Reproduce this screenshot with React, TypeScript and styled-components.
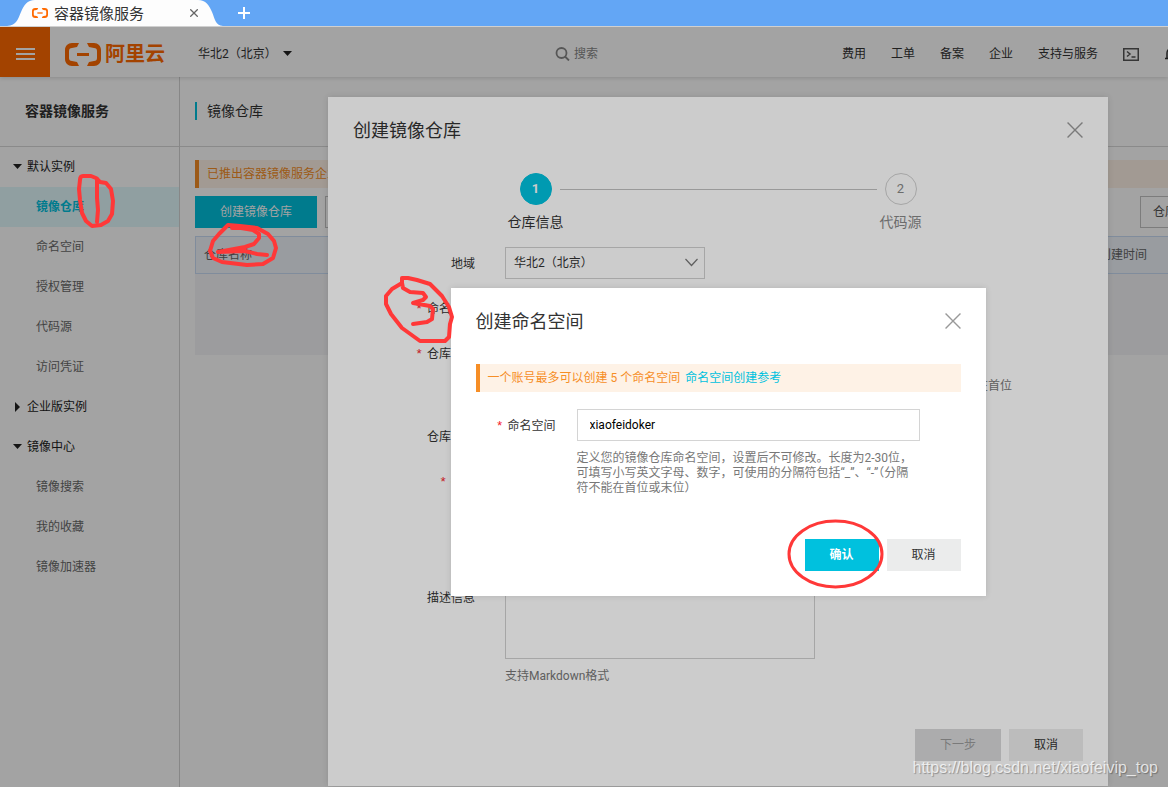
import React from 'react';
import styled, { createGlobalStyle } from 'styled-components';

const GlobalStyle = createGlobalStyle`
  * { box-sizing: border-box; }
  body {
    margin: 0;
    font-family: Roboto, "Noto Sans CJK SC", sans-serif;
    font-size: 12px;
    line-height: 16px;
    color: #333;
    background: #fff;
  }
  button, input, select, textarea { font: inherit; color: inherit; margin: 0; }
  button { cursor: pointer; }
  h1, h2, h3, p, ul { margin: 0; padding: 0; font-weight: 400; }
  ul { list-style: none; }
  a { color: inherit; text-decoration: none; }
`;

const accent = '#00c1de';
const brand = '#ff6a00';

const Page = styled.div`
  position: relative;
  display: flex;
  flex-direction: column;
  min-height: 100vh;
  overflow: hidden;
`;

/* browser tab strip */

const TabStrip = styled.div`
  display: flex;
  align-items: center;
  gap: 14px;
  height: 27px;
  padding-left: 7px;
  background: #63a6f5;
  border-bottom: 1px solid #d0d0d0;
`;

const Tab = styled.div`
  position: relative;
  display: flex;
  align-items: center;
  width: 216px;
  height: 26px;
  padding: 0 25px;
  gap: 6px;
  font-size: 15px;
`;

const TabShape = styled.svg`
  position: absolute;
  inset: 0;
`;

const TabLogo = styled.span`
  position: relative;
  display: flex;
`;

const TabTitle = styled.span`
  position: relative;
  flex: 1;
  height: 24px;
  line-height: 26px;
  white-space: nowrap;
`;

const IconButton = styled.button`
  position: relative;
  display: flex;
  align-items: center;
  justify-content: center;
  padding: 0;
  border: 0;
  background: none;
`;

/* console header */

const Console = styled.div`
  position: relative;
  flex: 1;
  display: flex;
  flex-direction: column;
  overflow: hidden;
`;

const Header = styled.header`
  position: relative;
  display: flex;
  align-items: center;
  height: 50px;
  padding-top: 4px;
  background: #fff;
  box-shadow: 0 1px 4px rgba(0, 0, 0, 0.15);
`;

const MenuButton = styled(IconButton)`
  align-self: stretch;
  width: 50px;
  margin-top: -4px;
  padding-top: 4px;
  background: ${brand};
`;

const Logo = styled.a`
  display: flex;
  align-items: center;
  gap: 4px;
  margin-left: 15px;
  color: ${brand};
  font-size: 20px;
  font-weight: 700;
  line-height: 28px;
  white-space: nowrap;
`;

const RegionButton = styled.button`
  display: flex;
  align-items: center;
  gap: 5px;
  width: 95px;
  margin-left: 33px;
  padding: 0;
  border: 0;
  background: none;
  white-space: nowrap;
`;

const SearchArea = styled.div`
  flex: 1;
  padding-left: 262px;
`;

const SearchButton = styled.button`
  display: flex;
  align-items: center;
  gap: 4px;
  padding: 0;
  border: 0;
  background: none;
  color: #888;
  white-space: nowrap;
`;

const TopNav = styled.nav`
  display: flex;
  align-items: center;
  gap: 25px;
  width: 326px;
  overflow: hidden;
  white-space: nowrap;

  & > * { flex: none; }
`;

/* sidebar */

const Body = styled.div`
  flex: 1;
  display: flex;
`;

const Sidebar = styled.aside`
  flex: 0 0 180px;
  border-right: 1px solid #d4d4d4;
`;

const SidebarTitle = styled.h2`
  height: 70px;
  padding-left: 25px;
  border-bottom: 1px solid #d9d9d9;
  font-size: 14px;
  font-weight: 700;
  line-height: 68px;
`;

const NavGroup = styled.button`
  display: flex;
  align-items: center;
  gap: 4px;
  width: 100%;
  height: 40px;
  padding: 0 0 0 12px;
  border: 0;
  background: none;
  color: #222;
`;

const NavItem = styled.a<{ $active?: boolean }>`
  display: block;
  height: 40px;
  padding-left: 36px;
  line-height: 41px;
  color: ${(p) => (p.$active ? accent : '#6a6a6a')};
  background: ${(p) => (p.$active ? '#e1f9fd' : 'transparent')};
  font-weight: ${(p) => (p.$active ? 700 : 400)};
`;

/* repository list behind the dialogs */

const Main = styled.main`
  flex: 1;
  min-width: 0;
`;

const PageTitle = styled.div`
  display: flex;
  align-items: center;
  height: 70px;
  padding: 0 0 2px 15px;
  border-bottom: 1px solid #d9d9d9;
`;

const PageHeading = styled.h1`
  padding-left: 10px;
  border-left: 2px solid ${accent};
  font-size: 14px;
  line-height: 18px;
`;

const Content = styled.div`
  display: flex;
  flex-direction: column;
  gap: 8px;
  padding: 13px 0 0 15px;
`;

const Alert = styled.div`
  height: 28px;
  padding-left: 8px;
  border-left: 4px solid #f68e26;
  background: #fef2e6;
  color: #f68e26;
  line-height: 29px;
  white-space: nowrap;
`;

const AlertLink = styled.a`
  margin-left: 2px;
  color: ${accent};
`;

const Toolbar = styled.div`
  display: flex;
  gap: 8px;
  height: 32px;
`;

const CreateButton = styled.button`
  width: 122px;
  padding: 0;
  border: 0;
  background: ${accent};
  color: #fff;
`;

const ToolbarSelect = styled.select`
  appearance: none;
  width: 120px;
  padding: 0 12px;
  border: 1px solid #c4c4c4;
  border-radius: 0;
  background: #fff;
  color: #555;
`;

const ToolbarEnd = styled.div`
  display: flex;
  width: 28px;
  margin-left: auto;
  overflow: hidden;

  & > * { flex: none; }
`;

const RepoTable = styled.table`
  width: 100%;
  border-collapse: collapse;
  background: #f5f6f8;

  th {
    height: 37px;
    padding: 0 8px;
    border: solid #c9dcf5;
    border-width: 1px 0;
    background: #f0f5fc;
    color: #666;
    font-weight: 400;
    text-align: left;
    white-space: nowrap;
  }
  th:first-child { border-left-width: 1px; }
  th:last-child { width: 77px; }
  td { height: 81px; padding: 0; }
`;

/* dialogs */

const Overlay = styled.div`
  position: absolute;
  inset: 0;
  display: flex;
  justify-content: center;
  align-items: flex-start;
  padding-left: 268px;
  background: rgba(0, 0, 0, 0.2);
`;

const Dialog = styled.section<{ $width: number; $top: number }>`
  flex: none;
  width: ${(p) => p.$width}px;
  margin-top: ${(p) => p.$top}px;
  padding: 21px 25px 25px;
  background: #fff;
  box-shadow: 0 0 6px rgba(0, 0, 0, 0.12);
`;

const DialogHead = styled.div`
  display: flex;
  align-items: center;
  justify-content: space-between;
  margin-bottom: 31px;
`;

const DialogTitle = styled.h2`
  height: 24px;
  font-size: 18px;
  line-height: 26px;
`;

const Steps = styled.div`
  display: grid;
  grid-template-columns: 32px 1fr 32px;
  gap: 7px 8px;
  align-items: center;
  justify-items: center;
  width: 397px;
  margin: 0 auto 15px;
`;

const StepDot = styled.span<{ $active?: boolean }>`
  width: 32px;
  height: 32px;
  border: 1px solid ${(p) => (p.$active ? accent : '#d0d0d0')};
  border-radius: 50%;
  background: ${(p) => (p.$active ? accent : 'transparent')};
  color: ${(p) => (p.$active ? '#fff' : '#888')};
  font-size: 13px;
  font-weight: ${(p) => (p.$active ? 700 : 400)};
  line-height: 30px;
  text-align: center;
`;

const StepLine = styled.span`
  width: 100%;
  height: 1px;
  background: #c0c0c0;
`;

const StepLabel = styled.span<{ $active?: boolean }>`
  color: ${(p) => (p.$active ? '#333' : '#888')};
  font-size: 14px;
  line-height: 20px;
  white-space: nowrap;
`;

const Form = styled.div<{ $gap: number }>`
  display: flex;
  flex-direction: column;
  gap: ${(p) => p.$gap}px;
`;

const Row = styled.div<{ $label: number; $gap: number }>`
  display: grid;
  grid-template-columns: ${(p) => p.$label}px minmax(0, 1fr);
  column-gap: ${(p) => p.$gap}px;
`;

const Label = styled.label<{ $required?: boolean }>`
  height: 32px;
  line-height: 34px;
  text-align: right;
  white-space: nowrap;

  &::before {
    content: ${(p) => (p.$required ? '"*"' : 'none')};
    margin-right: 4px;
    color: #f5222d;
    font-family: "Liberation Mono", monospace;
    font-size: 13px;
    line-height: 16px;
    vertical-align: middle;
  }
`;

const Control = styled.div<{ $width: number }>`
  position: relative;
  display: flex;
  flex-direction: column;
  width: ${(p) => p.$width}px;
`;

const Input = styled.input`
  height: 32px;
  padding: 0 12px;
  border: 1px solid #d4d4d4;
  color: #000;
  outline: 0;
`;

const Select = styled.select`
  appearance: none;
  height: 32px;
  padding: 0 8px;
  border: 1px solid #d0d0d0;
  border-radius: 0;
  background: #fff;
`;

const Chevron = styled.svg`
  position: absolute;
  top: 11px;
  right: 7px;
  pointer-events: none;
`;

const TextArea = styled.textarea`
  height: 78px;
  padding: 8px;
  border: 1px solid #d0d0d0;
  resize: none;
  background: #fff;
`;

const Help = styled.p`
  margin-top: 10px;
  color: #777;
  line-height: 15px;
`;

/* keeps a long rule on one line, past the width of its field */
const WideHelp = styled(Help)`
  display: flex;
  justify-content: flex-end;
  width: 507px;
  height: 28px;
  white-space: nowrap;
`;

const Actions = styled.div<{ $space: number }>`
  display: flex;
  justify-content: flex-end;
  gap: 8px;
  margin-top: ${(p) => p.$space}px;
`;

const Button = styled.button<{ $kind?: 'primary' | 'disabled' }>`
  width: ${(p) => (p.$kind === 'disabled' ? 86 : 74)}px;
  height: 32px;
  padding: 0;
  border: 0;
  background: ${(p) =>
    p.$kind === 'primary' ? accent : p.$kind === 'disabled' ? '#d7d8d9' : '#ebecec'};
  color: ${(p) => (p.$kind === 'primary' ? '#fff' : p.$kind === 'disabled' ? '#999' : '#333')};
  font-weight: ${(p) => (p.$kind === 'primary' ? 700 : 400)};
`;

const Markup = styled.svg`
  position: absolute;
  top: 0;
  left: 0;
  overflow: visible;
  pointer-events: none;
`;

const Watermark = styled.span`
  position: absolute;
  right: 10px;
  bottom: 9px;
  color: rgba(255, 255, 255, 0.75);
  font-family: "Liberation Sans", sans-serif;
  font-size: 16px;
  line-height: 20px;
  text-shadow: 1px 1px 1px rgba(0, 0, 0, 0.3);
`;

const BrandMark = ({ width, height }: { width: number; height: number }) => (
  <svg width={width} height={height} viewBox="0 0 36 23" preserveAspectRatio="none" fill={brand}>
    <path d="M14 0H7C3 0 0 3 0 7v9c0 4 3 7 7 7h7l-2-4-5-1c-2 0-3-1-3-3V8c0-2 1-3 3-3l5-1z" />
    <path d="M22 0h7c4 0 7 3 7 7v9c0 4-3 7-7 7h-7l2-4 5-1c2 0 3-1 3-3V8c0-2-1-3-3-3l-5-1z" />
    <path d="M12 10h12v3H12z" />
  </svg>
);

const Caret = ({ right }: { right?: boolean }) => (
  <svg width="11" height="10" viewBox="0 0 11 10" fill="#222" aria-hidden="true">
    {right ? <path d="M3 0l5 5-5 5z" /> : <path d="M1 2h9L5.500 7z" />}
  </svg>
);

const CloseIcon = ({ size, color = '#999', weight = 1.3 }: { size: number; color?: string; weight?: number }) => (
  <svg width={size} height={size} viewBox="0 0 15 15" fill="none" stroke={color} strokeWidth={weight}>
    <path d="M.5.5l14 14M14.500.5l-14 14" />
  </svg>
);

type MenuGroup = { name: string; open: boolean; items: string[] };

const menu: MenuGroup[] = [
  { name: '默认实例', open: true, items: ['镜像仓库', '命名空间', '授权管理', '代码源', '访问凭证'] },
  { name: '企业版实例', open: false, items: [] },
  { name: '镜像中心', open: true, items: ['镜像搜索', '我的收藏', '镜像加速器'] },
];

const topLinks = ['费用', '工单', '备案', '企业', '支持与服务'];

export default function App() {
  return (
    <Page>
      <GlobalStyle />
      <TabStrip>
        <Tab>
          <TabShape width="216" height="26" viewBox="0 0 216 26" aria-hidden="true">
            <path d="M0 26C10 25 11 19 14 12S20 0 28 0H191C199 0 202 5 205 12S208 25 216 26z" fill="#fdfdfd" />
          </TabShape>
          <TabLogo>
            <BrandMark width={16} height={10} />
          </TabLogo>
          <TabTitle>容器镜像服务</TabTitle>
          <IconButton aria-label="关闭标签页">
            <CloseIcon size={8} color="#666" weight={2.4} />
          </IconButton>
        </Tab>
        <IconButton aria-label="新建标签页">
          <svg width="14" height="14" viewBox="0 0 14 14" stroke="#fff" strokeWidth="2">
            <path d="M7 1v12M1 7h12" />
          </svg>
        </IconButton>
      </TabStrip>

      <Console>
        <Header>
          <MenuButton aria-label="菜单">
            <svg width="19" height="12" viewBox="0 0 19 12" stroke="#fff" strokeWidth="2">
              <path d="M0 1h19M0 6h19M0 11h19" />
            </svg>
          </MenuButton>
          <Logo href="#home">
            <BrandMark width={36} height={23} />
            阿里云
          </Logo>
          <RegionButton>
            华北2（北京）
            <Caret />
          </RegionButton>
          <SearchArea>
            <SearchButton>
              <svg width="15" height="14" viewBox="0 0 15 14" fill="none" stroke="#888" strokeWidth="1.800">
                <circle cx="6.500" cy="6" r="5" />
                <path d="M10 9.500l4 4" />
              </svg>
              搜索
            </SearchButton>
          </SearchArea>
          <TopNav>
            {topLinks.map((t) => (
              <a key={t} href="#nav">
                {t}
              </a>
            ))}
            <IconButton aria-label="命令行">
              <svg width="16" height="13" viewBox="0 0 16 13" fill="none" stroke="#555" strokeWidth="1.500">
                <path d="M.75.75h14.500v11.500H.75zM4 3.500l3 2.500-3 2.500M8.500 9h4" />
              </svg>
            </IconButton>
            <IconButton aria-label="通知">
              <svg width="16" height="16" viewBox="0 0 16 16" fill="none" stroke="#333" strokeWidth="1.500">
                <path d="M1 12.500h14M3 12V7a5 5 0 0 1 10 0v5M6.500 15h3" />
              </svg>
            </IconButton>
          </TopNav>
        </Header>

        <Body>
          <Sidebar>
            <SidebarTitle>容器镜像服务</SidebarTitle>
            {menu.map((g) => (
              <div key={g.name}>
                <NavGroup>
                  <Caret right={!g.open} />
                  {g.name}
                </NavGroup>
                {g.items.map((item) => (
                  <NavItem key={item} href="#menu" $active={item === '镜像仓库'}>
                    {item}
                  </NavItem>
                ))}
              </div>
            ))}
          </Sidebar>
          <Main>
            <PageTitle>
              <PageHeading>镜像仓库</PageHeading>
            </PageTitle>
            <Content>
              <Alert>已推出容器镜像服务企业版</Alert>
              <Toolbar>
                <CreateButton>创建镜像仓库</CreateButton>
                <ToolbarSelect aria-label="命名空间筛选" />
                <ToolbarEnd>
                  <ToolbarSelect aria-label="搜索字段">
                    <option>仓库名称</option>
                  </ToolbarSelect>
                </ToolbarEnd>
              </Toolbar>
              <RepoTable>
                <thead>
                  <tr>
                    <th>仓库名称</th>
                    <th>创建时间</th>
                  </tr>
                </thead>
                <tbody>
                  <tr>
                    <td colSpan={2} />
                  </tr>
                </tbody>
              </RepoTable>
            </Content>
          </Main>
        </Body>

        <Overlay>
          <Dialog $width={780} $top={70} role="dialog" aria-label="创建镜像仓库">
            <DialogHead>
              <DialogTitle>创建镜像仓库</DialogTitle>
              <IconButton aria-label="关闭">
                <CloseIcon size={16} />
              </IconButton>
            </DialogHead>
            <Steps>
              <StepDot $active>1</StepDot>
              <StepLine />
              <StepDot>2</StepDot>
              <StepLabel $active>仓库信息</StepLabel>
              <span />
              <StepLabel>代码源</StepLabel>
            </Steps>
            <Form $gap={13}>
              <Row $label={122} $gap={30}>
                <Label htmlFor="region">地域</Label>
                <Control $width={200}>
                  <Select id="region">
                    <option>华北2（北京）</option>
                  </Select>
                  <Chevron width="13" height="9" viewBox="0 0 13 9" fill="none" stroke="#777" strokeWidth="1.200">
                    <path d="M.5 1l6 6.500 6-6.500" />
                  </Chevron>
                </Control>
              </Row>
              <Row $label={122} $gap={30}>
                <Label htmlFor="ns" $required>
                  命名空间
                </Label>
                <Control $width={310}>
                  <Select id="ns" />
                </Control>
              </Row>
              <Row $label={122} $gap={30}>
                <Label htmlFor="repo" $required>
                  仓库名称
                </Label>
                <Control $width={310}>
                  <Input id="repo" />
                  <WideHelp>长度为2-64个字符，可使用小写英文字母、数字，可使用分隔符，不能在首位</WideHelp>
                </Control>
              </Row>
              <Row $label={122} $gap={30}>
                <Label htmlFor="kind">仓库类型</Label>
                <Control $width={310}>
                  <Select id="kind" />
                </Control>
              </Row>
              <Row $label={122} $gap={30}>
                <Label htmlFor="summary" $required>
                  摘要
                </Label>
                <Control $width={310}>
                  <TextArea id="summary" />
                  <Help>长度最长100个字符</Help>
                </Control>
              </Row>
              <Row $label={122} $gap={30}>
                <Label htmlFor="desc">描述信息</Label>
                <Control $width={310}>
                  <TextArea id="desc" />
                  <Help>支持Markdown格式</Help>
                </Control>
              </Row>
            </Form>
            <Actions $space={45}>
              <Button $kind="disabled" disabled>
                下一步
              </Button>
              <Button>取消</Button>
            </Actions>
          </Dialog>
        </Overlay>

        <Overlay>
          <Dialog $width={535} $top={261} role="dialog" aria-label="创建命名空间">
            <DialogHead>
              <DialogTitle>创建命名空间</DialogTitle>
              <IconButton aria-label="关闭">
                <CloseIcon size={16} />
              </IconButton>
            </DialogHead>
            <Form $gap={17}>
              <Alert>
                一个账号最多可以创建 5 个命名空间 <AlertLink href="#guide">命名空间创建参考</AlertLink>
              </Alert>
              <Row $label={80} $gap={21}>
                <Label htmlFor="namespace" $required>
                  命名空间
                </Label>
                <Control $width={343}>
                  <Input id="namespace" defaultValue="xiaofeidoker" />
                  <Help>
                    定义您的镜像仓库命名空间，设置后不可修改。长度为2-30位，可填写小写英文字母、数字，可使用的分隔符包括“_”、“-”（分隔符不能在首位或末位）
                  </Help>
                </Control>
              </Row>
            </Form>
            <Actions $space={43}>
              <Button $kind="primary">确认</Button>
              <Button>取消</Button>
            </Actions>
          </Dialog>
        </Overlay>
      </Console>

      <Markup width="1" height="1" fill="none" stroke="#ff3838" strokeWidth="4" strokeLinecap="round" strokeLinejoin="round" aria-hidden="true">
        <path d="M80 180Q80 176 83 176L91 176L96 178L100 182L106 183L111 189L113 201L112 214L108 221L101 225L92 226L86 221L82 213L80 200L79 189Z" />
        <path d="M97 179V198L98 210L97 222" />
        <path d="M228 225L219 234L213 241L210 251L213 258L222 262L247 265L263 264L273 258L276 248L274 241L268 234L257 228L240 226Z" />
        <path d="M232 228H241L253 230L259 234V238L254 244L245 247L218 252L245 251L257 254L267 255" />
        <path d="M402 285V278L408 278L417 280L430 284L442 296L449 307L452 317L450 324L449 337L445 341H420L402 328L391 314L386 304L386 296L392 289L402 283L403 288L410 292L423 293L426 297L423 300L413 303L430 306L433 309L432 319L427 322L413 324" />
        <ellipse cx="835.500" cy="554" rx="46.500" ry="33" strokeWidth="3" />
      </Markup>
      <Watermark>https://blog.csdn.net/xiaofeivip_top</Watermark>
    </Page>
  );
}
